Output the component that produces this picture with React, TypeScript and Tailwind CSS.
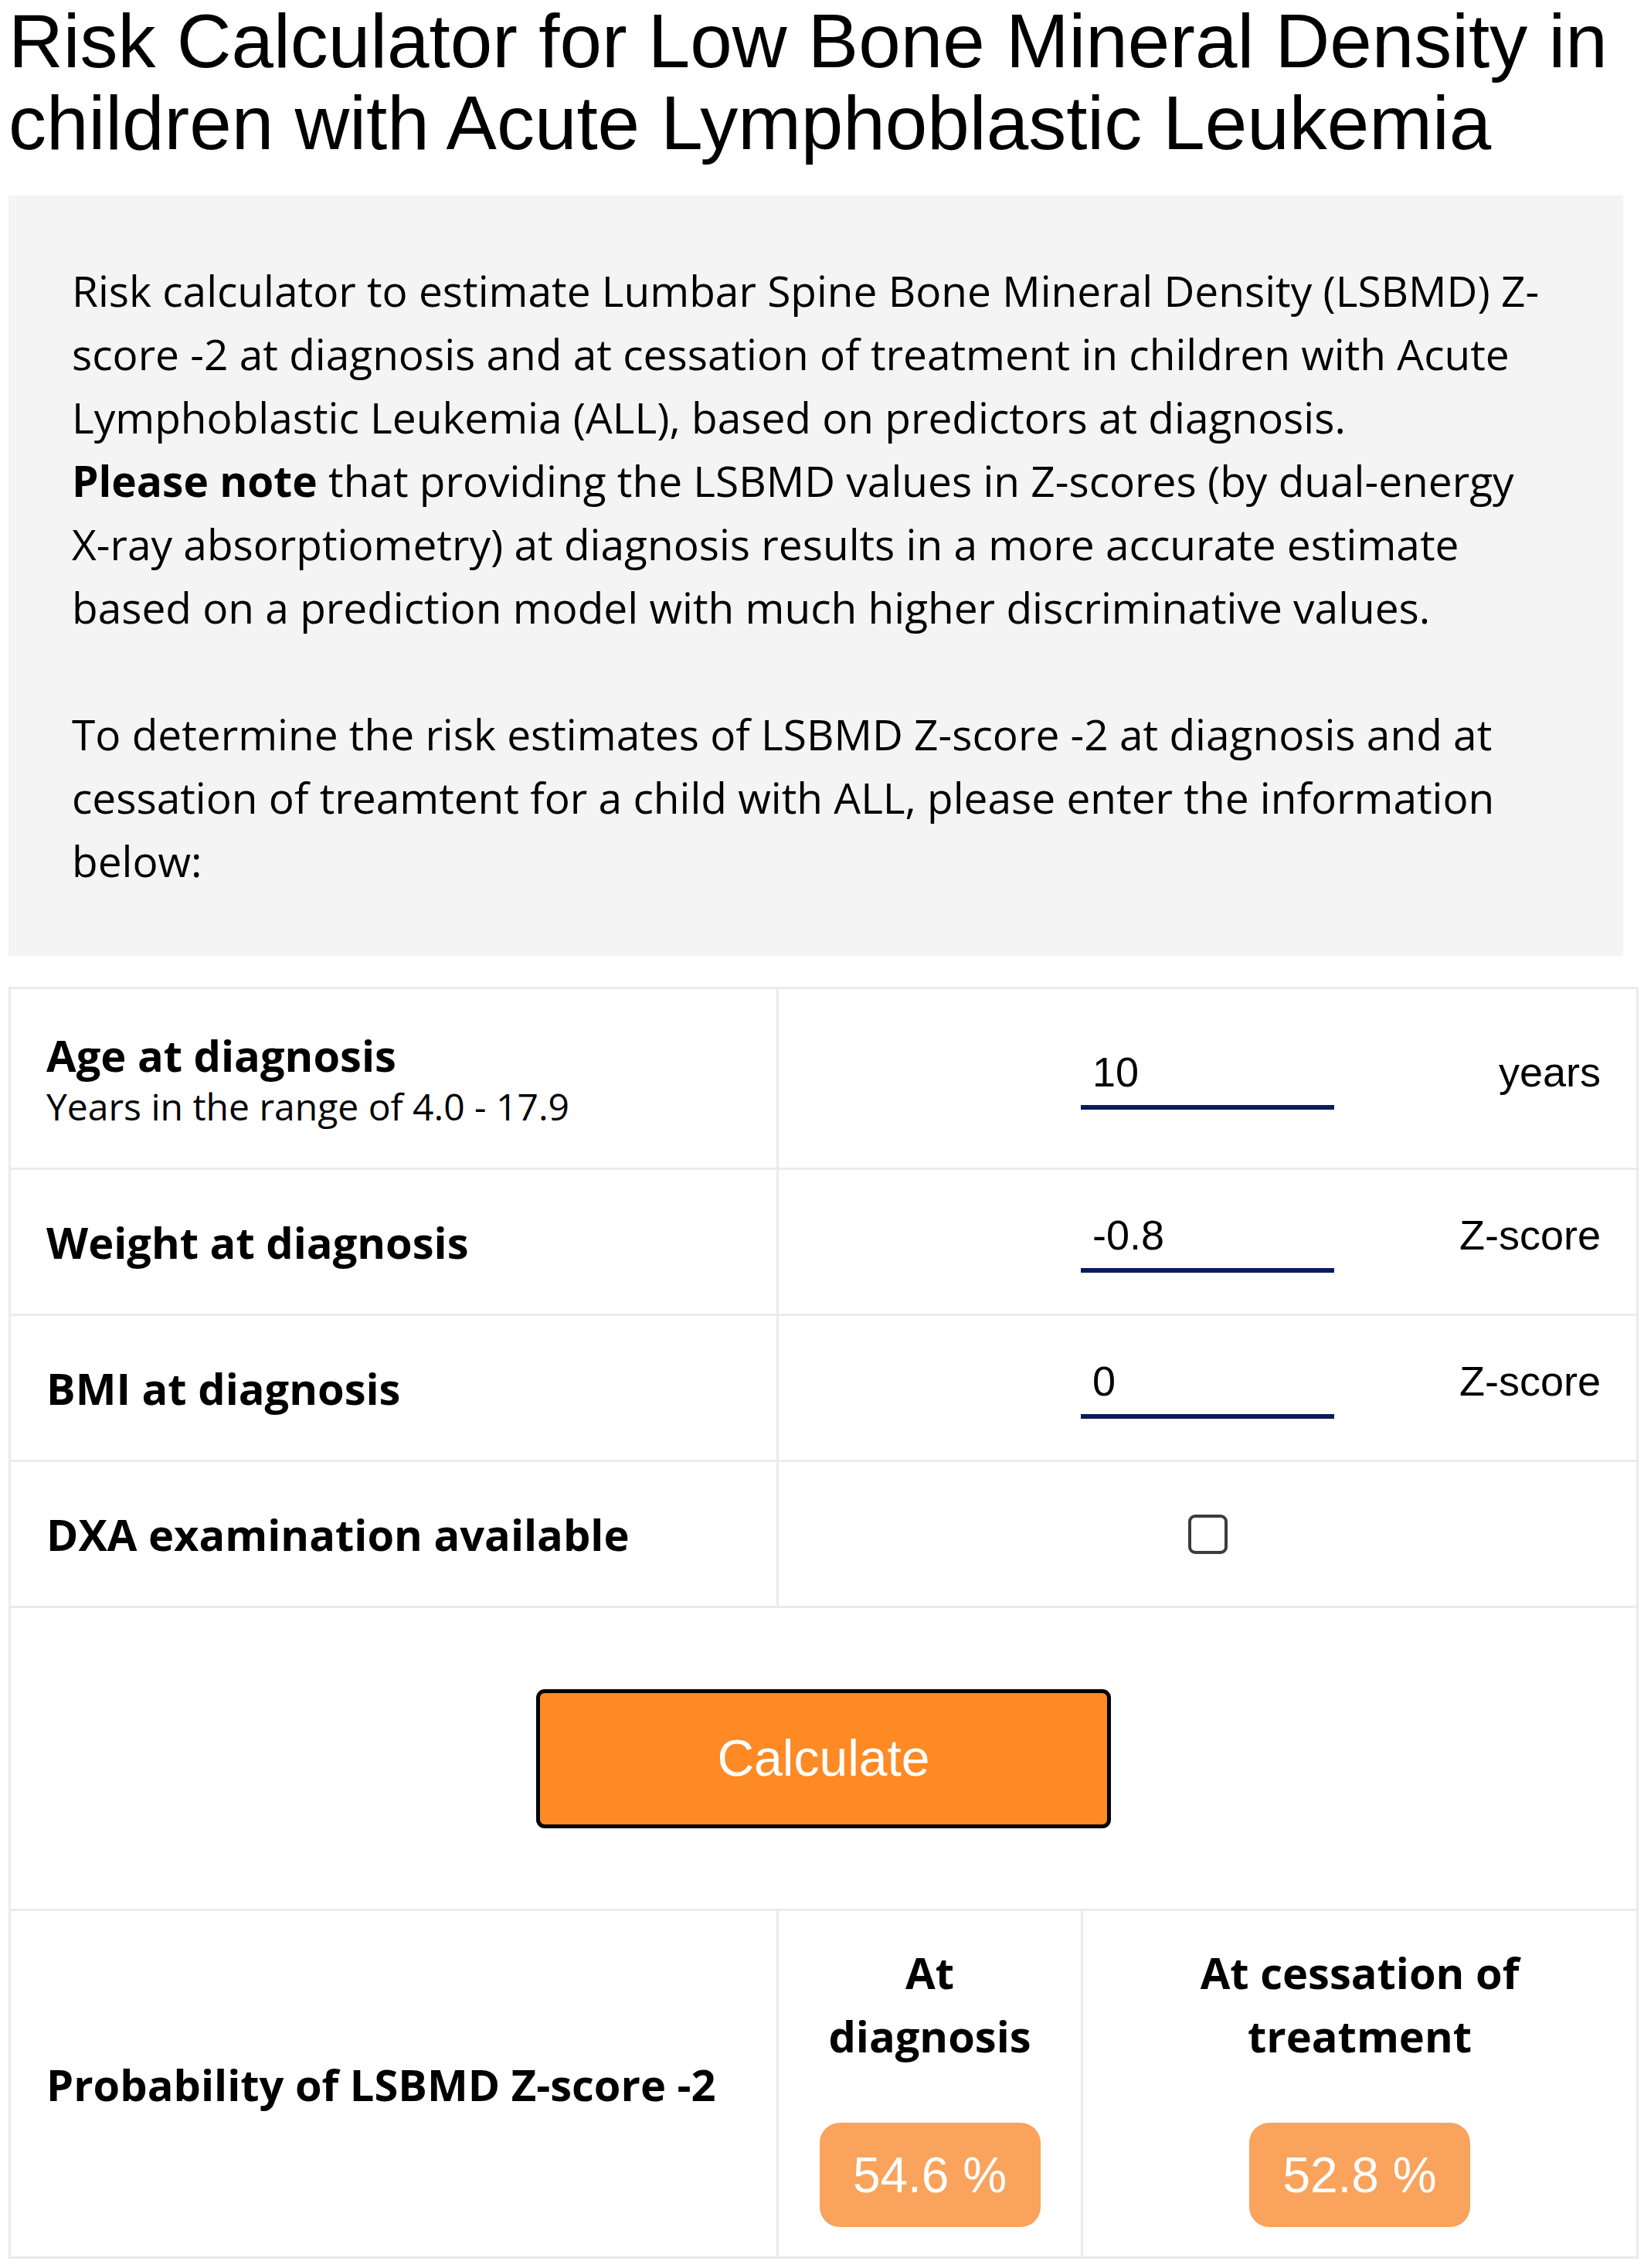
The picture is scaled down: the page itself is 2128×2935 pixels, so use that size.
const sans = "font-['Open_Sans','Noto_Sans',sans-serif]";
const arial = "font-['Liberation_Sans',Arial,sans-serif]";

function NumberField({ value, unit }: { value: string; unit: string }) {
  return (
    <div className="grid grid-cols-[1fr_auto_1fr] items-start">
      <div />
      <input
        defaultValue={value}
        className={`${arial} w-[328px] border-b-[6px] border-[#0c1b5a] bg-transparent pb-[12px] pl-[15px] text-[54px] leading-[62px] text-black outline-none`}
      />
      <div className={`${arial} pr-[46px] text-right text-[54px] leading-[62px] text-black`}>
        {unit}
      </div>
    </div>
  );
}

function Badge({ value }: { value: string }) {
  return (
    <div
      className={`${arial} mx-auto mt-[72px] flex h-[135px] w-[286px] items-center justify-center rounded-[26px] bg-[#f9a35c] text-[64px] text-white`}
    >
      {value}
    </div>
  );
}

export default function App() {
  const cell = "border-[3px] border-[#ebebeb]";
  const label = "text-[56px] font-bold leading-[72px]";

  return (
    <div className="min-h-screen bg-white px-[11px] text-black">
      <h1 className={`${arial} text-[98px] font-normal leading-[106px]`}>
        Risk Calculator for Low Bone Mineral Density in children with Acute
        Lymphoblastic Leukemia
      </h1>

      <div
        className={`${sans} mt-[41px] w-[2090px] bg-[#f4f4f4] p-[82px] text-[55px] leading-[82px]`}
      >
        <p>
          Risk calculator to estimate Lumbar Spine Bone Mineral Density
          (LSBMD) Z-score -2 at diagnosis and at cessation of treatment in
          children with Acute Lymphoblastic Leukemia (ALL), based on
          predictors at diagnosis.
          <br />
          <b>Please note</b> that providing the LSBMD values in Z-scores (by
          dual-energy X-ray absorptiometry) at diagnosis results in a more
          accurate estimate based on a prediction model with much higher
          discriminative values.
        </p>
        <p className="mt-[82px]">
          To determine the risk estimates of LSBMD Z-score -2 at diagnosis and
          at cessation of treamtent for a child with ALL, please enter the
          information below:
        </p>
      </div>

      <table className={`${sans} mt-[40px] w-[2107px] table-fixed border-collapse`}>
        <colgroup>
          <col className="w-[994px]" />
          <col className="w-[394px]" />
          <col className="w-[719px]" />
        </colgroup>
        <tbody>
          <tr className="h-[234px]">
            <td className={`${cell} px-[46px]`}>
              <div className={label}>Age at diagnosis</div>
              <div className="text-[48px] leading-[62px]">Years in the range of 4.0 - 17.9</div>
            </td>
            <td colSpan={2} className={cell}>
              <NumberField value="10" unit="years" />
            </td>
          </tr>
          <tr className="h-[189px]">
            <td className={`${cell} px-[46px] ${label}`}>Weight at diagnosis</td>
            <td colSpan={2} className={cell}>
              <NumberField value="-0.8" unit="Z-score" />
            </td>
          </tr>
          <tr className="h-[189px]">
            <td className={`${cell} px-[46px] ${label}`}>BMI at diagnosis</td>
            <td colSpan={2} className={cell}>
              <NumberField value="0" unit="Z-score" />
            </td>
          </tr>
          <tr className="h-[189px]">
            <td className={`${cell} px-[46px] ${label}`}>DXA examination available</td>
            <td colSpan={2} className={cell}>
              <div className="flex justify-center">
                <input
                  type="checkbox"
                  className="h-[51px] w-[51px] appearance-none rounded-[9px] border-[4px] border-[#3c3c3c] bg-white"
                />
              </div>
            </td>
          </tr>
          <tr className="h-[392px]">
            <td colSpan={3} className={cell}>
              <div className="flex justify-center">
                <button
                  className={`${arial} h-[180px] w-[744px] rounded-[11px] border-[5px] border-black bg-[#fd8a25] text-[66px] text-white`}
                >
                  Calculate
                </button>
              </div>
            </td>
          </tr>
          <tr className="h-[450px]">
            <td className={`${cell} px-[46px] ${label}`}>Probability of LSBMD Z-score -2</td>
            <td className={`${cell} px-[46px] text-center`}>
              <div className="text-[56px] font-bold leading-[82px]">At diagnosis</div>
              <Badge value="54.6 %" />
            </td>
            <td className={`${cell} px-[46px] text-center`}>
              <div className="text-[56px] font-bold leading-[82px]">At cessation of treatment</div>
              <Badge value="52.8 %" />
            </td>
          </tr>
        </tbody>
      </table>
    </div>
  );
}
